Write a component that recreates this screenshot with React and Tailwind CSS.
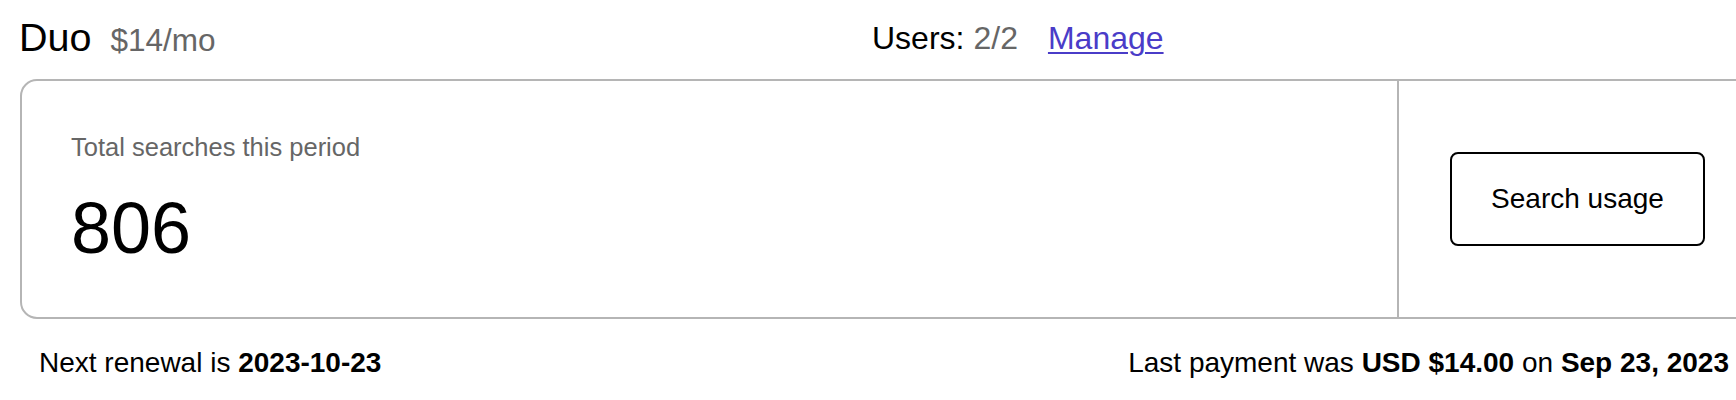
export default function App() {
  return (
    <div className="w-[1736px] h-[400px] overflow-hidden bg-white text-black font-['Liberation_Sans',Arial,sans-serif]">
      <div className="flex items-baseline pl-[19px] pt-[14px] h-[79px]">
        <div className="flex items-baseline w-[853px]">
          <span className="text-[39.5px] leading-[46px]">Duo</span>
          <span className="ml-[19px] text-[31.5px] text-[#666666]">$14/mo</span>
        </div>
        <div className="flex items-baseline text-[32px] -translate-y-[2px]">
          <span>Users:</span>
          <span className="ml-[9px] text-[#666666]">2/2</span>
          <a href="#" className="ml-[30px] text-[#4a3cc8] underline underline-offset-[3px] decoration-[2px]">Manage</a>
        </div>
      </div>
      <div className="ml-[20px] w-[1738px] h-[240px] flex border-2 border-[#b5b5b5] rounded-[17px]">
        <div className="flex-1 flex flex-col pl-[49px] pt-[51px]">
          <div className="text-[25.5px] leading-[30px] text-[#666666]">Total searches this period</div>
          <div className="mt-[30px] text-[72px] leading-[72px]">806</div>
        </div>
        <div className="w-[359px] border-l-2 border-[#b5b5b5] flex items-center justify-center">
          <button className="w-[255px] h-[94px] border-2 border-black rounded-[8px] text-[28px] bg-white">Search usage</button>
        </div>
      </div>
      <div className="flex justify-between items-baseline pl-[39px] pr-[7px] mt-[28px] text-[28px] leading-[32px]">
        <div>
          Next renewal is <span className="font-bold">2023-10-23</span>
        </div>
        <div>
          Last payment was <span className="font-bold">USD $14.00</span> on <span className="font-bold">Sep 23, 2023</span>
        </div>
      </div>
    </div>
  );
}
